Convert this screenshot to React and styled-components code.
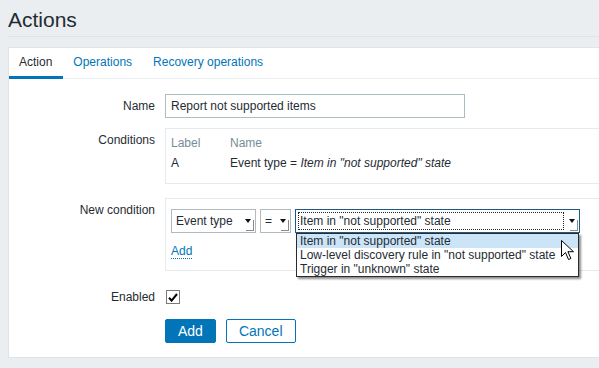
import styled, { createGlobalStyle } from "styled-components";

const GlobalStyle = createGlobalStyle`
  html, body {
    margin: 0;
    padding: 0;
    background: #ebeef0;
    overflow: hidden;
  }
  body {
    font-family: "Liberation Sans", Arial, sans-serif;
    font-size: 12px;
    color: #1f2c33;
  }
`;

const Page = styled.div`
  width: 640px;
  padding-left: 8px;
`;

const Header = styled.header`
  padding: 8px 0 4px;
  border-bottom: 1px solid #dde3e7;
  margin-bottom: 10px;
`;

const Title = styled.h1`
  margin: 0;
  font-size: 21px;
  line-height: 24px;
  font-weight: normal;
  color: #1f2c33;
`;

const Panel = styled.div`
  background: #fff;
  border: 1px solid #dfe4e7;
`;

const TabBar = styled.ul`
  display: flex;
  margin: 0;
  padding: 0;
  list-style: none;
  height: 30px;
  border-bottom: 1px solid #ebeef0;
`;

const Tab = styled.li`
  box-sizing: border-box;
  height: 31px;
  padding: 0 11px 0 10px;
  line-height: 28px;
  margin-bottom: -1px;
  color: ${(p) => (p.$active ? "#1f2c33" : "#0275b8")};
  border-bottom: 3px solid ${(p) => (p.$active ? "#0275b8" : "transparent")};
`;

const Form = styled.div`
  display: grid;
  grid-template-columns: 146px 1fr;
  column-gap: 10px;
  row-gap: 10px;
  padding: 15px 0 14px;
`;

const Label = styled.div`
  text-align: right;
  padding-top: 5px;
  line-height: 14px;
`;

const Field = styled.div`
  display: flex;
  align-items: flex-start;
  min-height: 24px;
`;

const TextInput = styled.input`
  box-sizing: border-box;
  width: 300px;
  height: 24px;
  border: 1px solid #acbbc2;
  padding: 0 5px;
  font-family: inherit;
  font-size: 12px;
  color: #1f2c33;
  outline: none;
`;

const Box = styled.div`
  flex: 1;
  border: 1px solid #e6eaec;
  margin-bottom: 4px;
  padding: ${(p) => p.$pad};
`;

const Table = styled.table`
  border-collapse: collapse;
  th,
  td {
    padding: 3px 0;
    line-height: 14px;
    text-align: left;
    font-weight: normal;
    white-space: nowrap;
  }
  th {
    color: #768d99;
  }
  th:first-child,
  td:first-child {
    width: 59px;
  }
`;

const SelectRow = styled.div`
  display: flex;
  gap: 4px;
`;

const Select = styled.div`
  position: relative;
  box-sizing: border-box;
  display: flex;
  align-items: center;
  width: ${(p) => p.$w}px;
  height: 24px;
  padding-right: 1px;
  background: #fff;
  border: 1px solid ${(p) => (p.$focused ? "#1d5b86" : "#b0bbc1")};
`;

const SelectValue = styled.span`
  flex: 1;
  margin: 2px;
  padding: 0 1px;
  line-height: 16px;
  white-space: nowrap;
  overflow: hidden;
  border: 1px dotted ${(p) => (p.$focused ? "#222" : "transparent")};
`;

const Arrow = styled.span`
  flex: 0 0 12px;
  height: 20px;
  display: flex;
  align-items: center;
  justify-content: center;
  background:
    linear-gradient(#8a8a8a, #8a8a8a) right bottom / 1px 55% no-repeat,
    linear-gradient(#8a8a8a, #8a8a8a) right bottom / 70% 1px no-repeat;
`;

const Dropdown = styled.ul`
  position: absolute;
  top: calc(100% + 1px);
  left: 0;
  right: 0;
  z-index: 2;
  margin: 0;
  padding: 0;
  list-style: none;
  background: #fff;
  border: 1px solid #2b2b2b;
  box-shadow: 2px 2px 2px rgba(0, 0, 0, 0.45);
`;

const Option = styled.li`
  height: 14px;
  line-height: 14px;
  padding: 0 3px;
  white-space: nowrap;
  background: ${(p) => (p.$active ? "#cce4f7" : "transparent")};
`;

const Cursor = styled.svg`
  position: absolute;
  left: 264px;
  top: 6px;
`;

const AddLink = styled.a`
  display: inline-block;
  margin-top: 11px;
  line-height: 14px;
  color: #0275b8;
  text-decoration: none;
  border-bottom: 1px dotted #0275b8;
`;

const Checkbox = styled.span`
  box-sizing: border-box;
  width: 14px;
  height: 14px;
  margin: 5px 0 0 1px;
  border: 1px solid #7a7a7a;
  background: #fff;
  display: flex;
  align-items: center;
  justify-content: center;
`;

const Buttons = styled.div`
  display: flex;
  gap: 10px;
`;

const Button = styled.button`
  box-sizing: border-box;
  height: 24px;
  padding: 0 12px;
  font-family: inherit;
  font-size: 14px;
  border-radius: 2px;
  border: 1px solid #0275b8;
  background: ${(p) => (p.$primary ? "#0275b8" : "#fff")};
  color: ${(p) => (p.$primary ? "#fff" : "#0275b8")};
`;

const ArrowIcon = () => (
  <svg width="6" height="4" viewBox="0 0 6 4">
    <path d="M0 0h6L3 4z" fill="#111" />
  </svg>
);

const options = [
  'Item in "not supported" state',
  'Low-level discovery rule in "not supported" state',
  'Trigger in "unknown" state',
];

const App = () => {
  return (
    <Page>
      <GlobalStyle />
      <Header>
        <Title>Actions</Title>
      </Header>
      <Panel>
        <TabBar>
          <Tab $active>Action</Tab>
          <Tab>Operations</Tab>
          <Tab>Recovery operations</Tab>
        </TabBar>
        <Form>
          <Label>Name</Label>
          <Field>
            <TextInput defaultValue="Report not supported items" />
          </Field>

          <Label>Conditions</Label>
          <Field>
            <Box $pad="4px 5px 10px">
              <Table>
                <thead>
                  <tr>
                    <th>Label</th>
                    <th>Name</th>
                  </tr>
                </thead>
                <tbody>
                  <tr>
                    <td>A</td>
                    <td>
                      Event type = <i>Item in "not supported" state</i>
                    </td>
                  </tr>
                </tbody>
              </Table>
            </Box>
          </Field>

          <Label>New condition</Label>
          <Field>
            <Box $pad="10px 5px 11px">
              <SelectRow>
                <Select $w={85}>
                  <SelectValue>Event type</SelectValue>
                  <Arrow>
                    <ArrowIcon />
                  </Arrow>
                </Select>
                <Select $w={31}>
                  <SelectValue>=</SelectValue>
                  <Arrow>
                    <ArrowIcon />
                  </Arrow>
                </Select>
                <Select $w={285} $focused>
                  <SelectValue $focused>{options[0]}</SelectValue>
                  <Arrow>
                    <ArrowIcon />
                  </Arrow>
                  <Dropdown>
                    {options.map((o, i) => (
                      <Option key={o} $active={i === 0}>
                        {o}
                      </Option>
                    ))}
                    <Cursor width="13" height="21" viewBox="0 0 13 21">
                      <path
                        d="M0.5 0.5v16l4-4 3 7 2.4-1-3-6.8h5.6z"
                        fill="#fff"
                        stroke="#000"
                        strokeWidth="1"
                        strokeLinejoin="round"
                      />
                    </Cursor>
                  </Dropdown>
                </Select>
              </SelectRow>
              <AddLink>Add</AddLink>
            </Box>
          </Field>

          <Label>Enabled</Label>
          <Field>
            <Checkbox>
              <svg width="10" height="9" viewBox="0 0 10 9">
                <path d="M1 4.8l2.6 2.8L9 1" fill="none" stroke="#000" strokeWidth="2" />
              </svg>
            </Checkbox>
          </Field>

          <div />
          <Buttons>
            <Button $primary>Add</Button>
            <Button>Cancel</Button>
          </Buttons>
        </Form>
      </Panel>
    </Page>
  );
};

export default App;
